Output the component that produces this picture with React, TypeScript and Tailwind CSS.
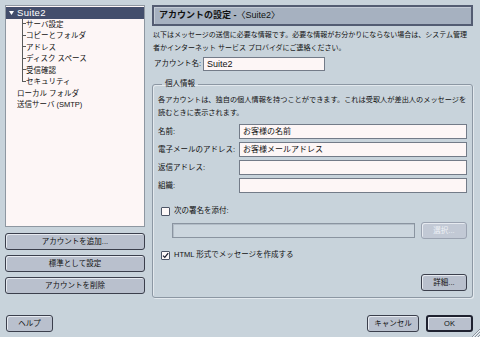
import React from "react";

function Btn({
  children,
  className = "",
  def = false,
  disabled = false,
}: {
  children: React.ReactNode;
  className?: string;
  def?: boolean;
  disabled?: boolean;
}) {
  const border = disabled
    ? "border border-[#9ba3b1] bg-[#c2c9d5] text-[#eef1f5]"
    : def
    ? "border-2 border-[#1f2230] bg-[#b9c0cd] text-[#111111]"
    : "border border-[#3b3f4c] bg-[#b9c0cd] text-[#111111]";
  return (
    <div
      className={`flex items-center justify-center h-[17px] rounded-[3px] shadow-[inset_1px_1px_0_#e6eaf0] text-[7.5px] leading-none ${border} ${className}`}
    >
      {children}
    </div>
  );
}

function Check({ checked = false }: { checked?: boolean }) {
  return (
    <div className="w-[9px] h-[9px] border border-[#4d5566] bg-[#fdf8f8] rounded-[1px] flex items-center justify-center shrink-0">
      {checked && (
        <svg width="7" height="7" viewBox="0 0 7 7">
          <path d="M1 3.6 L2.8 5.4 L6.2 1.2" fill="none" stroke="#1d2030" strokeWidth="1.3" />
        </svg>
      )}
    </div>
  );
}

function Field({ label, value }: { label: string; value?: string }) {
  return (
    <div className="flex items-center h-[15px]">
      <div className="w-[81px] text-[7.5px] leading-none">{label}</div>
      <div className="flex-1 h-[15px] border border-[#737b88] bg-[#fdf6f6] flex items-center px-[3px] text-[8px] leading-none">
        {value}
      </div>
    </div>
  );
}

export default function App() {
  const children = [
    "サーバ設定",
    "コピーとフォルダ",
    "アドレス",
    "ディスク スペース",
    "受信確認",
    "セキュリティ",
  ];
  return (
    <div className="relative w-[480px] h-[337px] overflow-hidden bg-[#c8d3db] text-[#111111] font-['Liberation_Sans','Noto_Sans_CJK_JP',sans-serif] pt-[5px] pl-[5px] pr-[7px]">
      <div className="flex gap-[7px]">
        {/* left column */}
        <div className="w-[140px] flex flex-col">
          <div className="h-[222px] border border-[#8e97a1] bg-[#fdf6f6] pt-[1px] text-[7.5px]">
            <div className="h-[11.5px] bg-[#434e6c] text-white flex items-center pl-[3px]">
              <svg width="5" height="4" viewBox="0 0 5 4">
                <path d="M0 0 L5 0 L2.5 4 Z" fill="#ffffff" />
              </svg>
              <span className="ml-[3px] text-[9.5px] leading-none tracking-[0.3px]">Suite2</span>
            </div>
            {children.map((c, i) => (
              <div key={c} className="h-[11.5px] flex items-stretch pl-[16px]">
                <div className="w-[4px] flex flex-col">
                  <div className="h-1/2 border-l border-b border-[#5a5a5a]" />
                  <div className={i < children.length - 1 ? "flex-1 border-l border-[#5a5a5a]" : "flex-1"} />
                </div>
                <span className="flex items-center leading-none">{c}</span>
              </div>
            ))}
            <div className="h-[11.5px] flex items-center pl-[11px] leading-none">ローカル フォルダ</div>
            <div className="h-[11.5px] flex items-center pl-[11px] leading-none">送信サーバ (SMTP)</div>
          </div>
          <div className="mt-[6px] flex flex-col gap-[5px]">
            <Btn>アカウントを追加...</Btn>
            <Btn>標準として設定</Btn>
            <Btn>アカウントを削除</Btn>
          </div>
        </div>

        {/* right column */}
        <div className="flex-1 flex flex-col">
          <div className="h-[21px] border-2 border-[#535c72] bg-[#a6b1c0] shadow-[inset_1px_1px_0_#c3cbd6] flex items-center px-[5px] text-[9px] leading-none">
            <span className="font-bold">アカウントの設定 - </span>
            <span>〈Suite2〉</span>
          </div>
          <div className="mt-[2px] pl-[1px] text-[7px] leading-[13px]">
            以下はメッセージの送信に必要な情報です。必要な情報がお分かりにならない場合は、システム管理者かインターネット サービス プロバイダにご連絡ください。
          </div>
          <div className="mt-[3px] flex items-center h-[14px] pl-[2px]">
            <div className="w-[49px] text-[7.5px] leading-none">アカウント名:</div>
            <div className="w-[122px] h-[14px] border border-[#737b88] bg-[#fdf6f6] flex items-center px-[3px] text-[9px] leading-none">
              Suite2
            </div>
          </div>

          <fieldset className="mt-[8px] border border-[#8c97a3] rounded-[3px] shadow-[inset_1px_1px_0_#e3e9ee,1px_1px_0_#e3e9ee] px-[5px] pb-[6px]">
            <legend className="ml-[4px] px-[3px] text-[7.5px] leading-[10px]">個人情報</legend>
            <div className="pt-[4px] text-[7.2px] leading-[13px]">
              各アカウントは、独自の個人情報を持つことができます。これは受取人が差出人のメッセージを読むときに表示されます。
            </div>
            <div className="mt-[5px] flex flex-col gap-[3px]">
              <Field label="名前:" value="お客様の名前" />
              <Field label="電子メールのアドレス:" value="お客様メールアドレス" />
              <Field label="返信アドレス:" />
              <Field label="組織:" />
            </div>
            <div className="mt-[13px] flex items-center gap-[4px] pl-[3px] h-[10px]">
              <Check />
              <span className="text-[7.5px] leading-none">次の署名を添付:</span>
            </div>
            <div className="mt-[6px] flex items-center pl-[14px] gap-[6px]">
              <div className="flex-1 h-[15px] border border-[#8a94a0] bg-[#ccd6de] shadow-[inset_1px_1px_0_#b3bdc7]" />
              <Btn disabled className="w-[46px]">選択...</Btn>
            </div>
            <div className="mt-[11px] flex items-center gap-[4px] pl-[3px] h-[10px]">
              <Check checked />
              <span className="text-[7.5px] leading-none">HTML 形式でメッセージを作成する</span>
            </div>
            <div className="mt-[14px] flex justify-end">
              <Btn className="w-[46px]">詳細...</Btn>
            </div>
          </fieldset>
        </div>
      </div>

      <div className="mt-[17px] flex items-center">
        <Btn className="ml-[1px] w-[47px]">ヘルプ</Btn>
        <div className="flex-1" />
        <Btn className="w-[52px]">キャンセル</Btn>
        <Btn def className="ml-[7px] w-[47px]">OK</Btn>
      </div>

      <svg className="absolute right-0 bottom-0" width="10" height="10" viewBox="0 0 10 10">
        <path d="M10 2 L2 10 M10 5 L5 10 M10 8 L8 10" stroke="#8a939e" strokeWidth="1" />
        <path d="M10 3 L3 10 M10 6 L6 10 M10 9 L9 10" stroke="#eef2f5" strokeWidth="1" />
      </svg>
    </div>
  );
}
